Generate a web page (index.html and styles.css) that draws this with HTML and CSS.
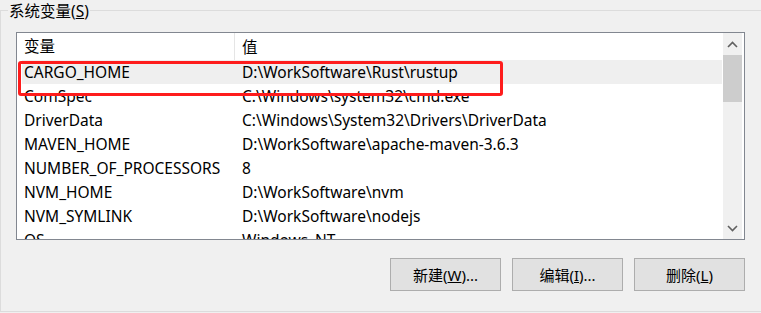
FILE: index.html
```html
<!DOCTYPE html>
<html lang="zh-CN">
<head>
    <meta charset="UTF-8">
    <title>系统变量</title>
    <link rel="stylesheet" href="styles.css">
</head>
<body>
    <div class="group">
        <div class="group-title">系统变量(<u>S</u>)</div>

        <div class="listbox">
            <div class="list">
                <div class="list-head">
                    <div class="col col-name">变量</div>
                    <div class="col col-value">值</div>
                </div>
                <div class="rows">
                    <div class="row selected">
                        <div class="col col-name">CARGO_HOME</div>
                        <div class="col col-value">D:\WorkSoftware\Rust\rustup</div>
                    </div>
                    <div class="row">
                        <div class="col col-name">ComSpec</div>
                        <div class="col col-value">C:\Windows\system32\cmd.exe</div>
                    </div>
                    <div class="row">
                        <div class="col col-name">DriverData</div>
                        <div class="col col-value">C:\Windows\System32\Drivers\DriverData</div>
                    </div>
                    <div class="row">
                        <div class="col col-name">MAVEN_HOME</div>
                        <div class="col col-value">D:\WorkSoftware\apache-maven-3.6.3</div>
                    </div>
                    <div class="row">
                        <div class="col col-name">NUMBER_OF_PROCESSORS</div>
                        <div class="col col-value">8</div>
                    </div>
                    <div class="row">
                        <div class="col col-name">NVM_HOME</div>
                        <div class="col col-value">D:\WorkSoftware\nvm</div>
                    </div>
                    <div class="row">
                        <div class="col col-name">NVM_SYMLINK</div>
                        <div class="col col-value">D:\WorkSoftware\nodejs</div>
                    </div>
                    <div class="row">
                        <div class="col col-name">OS</div>
                        <div class="col col-value">Windows_NT</div>
                    </div>
                </div>
            </div>

            <div class="scrollbar">
                <div class="arrow">
                    <svg width="11" height="7" viewBox="0 0 11 7"><path d="M1 6L5.5 1.5L10 6" fill="none" stroke="#606060" stroke-width="1.6"/></svg>
                </div>
                <div class="track">
                    <div class="thumb"></div>
                </div>
                <div class="arrow">
                    <svg width="11" height="7" viewBox="0 0 11 7"><path d="M1 1L5.5 5.5L10 1" fill="none" stroke="#606060" stroke-width="1.6"/></svg>
                </div>
            </div>

            <div class="mark"></div>
        </div>

        <div class="buttons">
            <button class="btn">新建(<u>W</u>)...</button>
            <button class="btn">编辑(<u>I</u>)...</button>
            <button class="btn">删除(<u>L</u>)</button>
        </div>
    </div>
</body>
</html>
```

FILE: styles.css
```css
body {
    margin: 0;
    background: #f0f0f0;
    font-family: 'Noto Sans', 'Noto Sans CJK SC', sans-serif;
    font-size: 15.5px;
    color: #000;
    overflow: hidden;
}

.group {
    position: relative;
    margin-top: 10px;
    width: 760px;
    height: 300px;
    border: 1px solid #dcdcdc;
    border-right: none;
}

.group-title {
    position: absolute;
    top: -10px;
    left: 7px;
    padding: 0 1px;
    line-height: 20px;
    background: #f0f0f0;
}

.listbox {
    position: relative;
    display: flex;
    margin: 21px 0 0 15px;
    width: 727px;
    height: 206px;
    border: 1px solid #828790;
    background: #fff;
    overflow: hidden;
}

.list {
    flex: 1;
    margin-right: 1px;
}

.list-head {
    display: flex;
    height: 27px;
    align-items: center;
}

.list-head .col-name {
    border-right: 1px solid #e5e5e5;
    height: 27px;
    line-height: 27px;
}

.col {
    padding-left: 7px;
    white-space: nowrap;
}

.col-name {
    width: 210px;
}

.rows {
    margin-left: 5px;
}

.rows .col-name {
    width: 211px;
    padding-left: 2px;
}

.row {
    display: flex;
    height: 24px;
    line-height: 24px;
}

.row.selected {
    background: #efefef;
}

.scrollbar {
    display: flex;
    flex-direction: column;
    width: 19px;
    margin-right: 2px;
    background: #f0f0f0;
}

.arrow {
    height: 22px;
    display: flex;
    align-items: center;
    justify-content: center;
}

.track {
    flex: 1;
}

.thumb {
    height: 47px;
    background: #cdcdcd;
}

.mark {
    position: absolute;
    left: 1px;
    top: 28px;
    width: 479px;
    height: 29px;
    border: 3px solid #fe1c1c;
    border-radius: 3px;
}

.buttons {
    display: flex;
    justify-content: flex-end;
    gap: 11px;
    width: 728px;
    margin: 18px 0 0 16px;
}

.btn {
    width: 111px;
    height: 33px;
    background: #e1e1e1;
    border: 1px solid #adadad;
    font-family: inherit;
    font-size: 15px;
    color: #000;
    padding: 0;
}
```
